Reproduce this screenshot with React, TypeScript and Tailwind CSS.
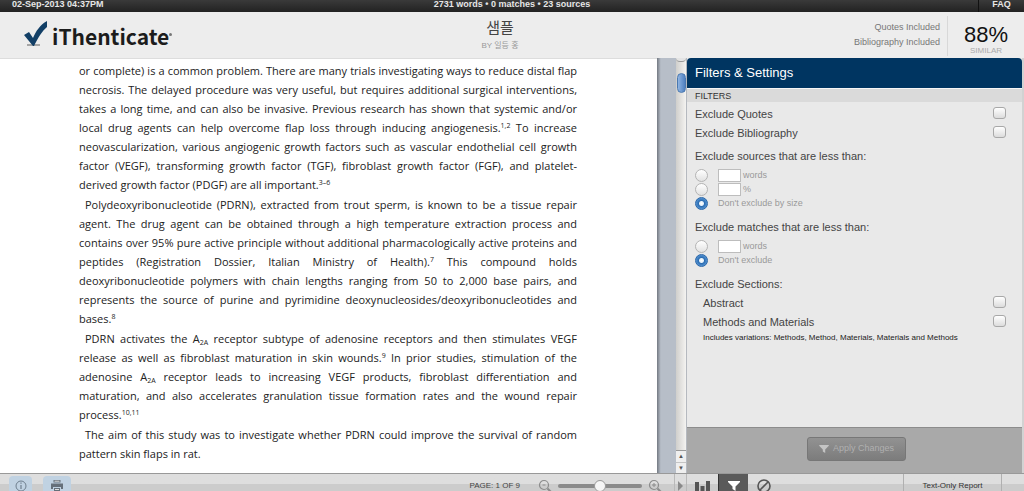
import { useState } from "react";
import type { ReactNode } from "react";

const checkboxClass =
  "mb-1 h-3 w-[13px] shrink-0 appearance-none rounded-[3px] border border-[#a8a8a8] bg-gradient-to-b from-white to-[#dcdcdc] checked:from-[#7fb0e0] checked:to-[#2f6fb4]";
const radioClass =
  "h-[13px] w-[13px] shrink-0 appearance-none rounded-full border border-[#b4b4b4] bg-gradient-to-b from-white to-[#e2e2e2] checked:border-[#2a66a8] checked:bg-[radial-gradient(circle,#ffffff_0,#e4f0fa_2px,#2c6db2_3px,#5c9ad8_6px)]";

type Line = { text: ReactNode; last?: boolean };

const S = ({ children }: { children: ReactNode }) => (
  <sup className="-top-1 text-[7px] leading-none">{children}</sup>
);
const Sub = () => <sub className="-bottom-0.5 text-[7px] leading-none">2A</sub>;

const paragraphs: Line[][] = [
  [
    { text: "or complete) is a common problem. There are many trials investigating ways to reduce distal flap" },
    { text: "necrosis. The delayed procedure was very useful, but requires additional surgical interventions," },
    { text: "takes a long time, and can also be invasive. Previous research has shown that systemic and/or" },
    { text: <>local drug agents can help overcome flap loss through inducing angiogenesis.<S>1,2</S> To increase</> },
    { text: "neovascularization, various angiogenic growth factors such as vascular endothelial cell growth" },
    { text: "factor (VEGF), transforming growth factor (TGF), fibroblast growth factor (FGF), and platelet-" },
    { text: <>derived growth factor (PDGF) are all important.<S>3–6</S></>, last: true },
  ],
  [
    { text: "Polydeoxyribonucleotide (PDRN), extracted from trout sperm, is known to be a tissue repair" },
    { text: "agent. The drug agent can be obtained through a high temperature extraction process and" },
    { text: "contains over 95% pure active principle without additional pharmacologically active proteins and" },
    { text: <>peptides (Registration Dossier, Italian Ministry of Health).<S>7</S> This compound holds</> },
    { text: "deoxyribonucleotide polymers with chain lengths ranging from 50 to 2,000 base pairs, and" },
    { text: "represents the source of purine and pyrimidine deoxynucleosides/deoxyribonucleotides and" },
    { text: <>bases.<S>8</S></>, last: true },
  ],
  [
    { text: <>PDRN activates the A<Sub /> receptor subtype of adenosine receptors and then stimulates VEGF</> },
    { text: <>release as well as fibroblast maturation in skin wounds.<S>9</S> In prior studies, stimulation of the</> },
    { text: <>adenosine A<Sub /> receptor leads to increasing VEGF products, fibroblast differentiation and</> },
    { text: "maturation, and also accelerates granulation tissue formation rates and the wound repair" },
    { text: <>process.<S>10,11</S></>, last: true },
  ],
  [
    { text: "The aim of this study was to investigate whether PDRN could improve the survival of random" },
    { text: "pattern skin flaps in rat.", last: true },
  ],
];

const FunnelIcon = ({ className }: { className: string }) => (
  <svg viewBox="0 0 12 10" className={className} fill="currentColor">
    <path d="M0 0h12v1L7.5 5.5V10L4.5 8V5.5L0 1z" />
  </svg>
);

const MagnifierIcon = ({ plus }: { plus?: boolean }) => (
  <svg viewBox="0 0 14 14" className="h-3.5 w-3.5 shrink-0 text-[#8c8c8c]" fill="none" stroke="currentColor">
    <circle cx="6" cy="6" r="4.5" strokeWidth="1.2" />
    <path d="M9.5 9.5l4 4" strokeWidth="2" />
    <path d={plus ? "M4 6h4M6 4v4" : "M4.5 6h3"} strokeWidth="1" />
  </svg>
);

const CheckRow = ({ id, label, indent }: { id: string; label: string; indent?: boolean }) => (
  <div className={`flex h-[19px] items-center justify-between ${indent ? "pl-2" : ""}`}>
    <label htmlFor={id}>{label}</label>
    <input id={id} type="checkbox" className={checkboxClass} />
  </div>
);

const LimitRow = ({ name, unit }: { name: string; unit: string }) => (
  <div className="flex h-3.5 items-center">
    <input type="radio" name={name} id={`${name}-${unit}`} className={radioClass} />
    <input
      type="text"
      aria-label={`${name} ${unit}`}
      className="ml-2.5 h-[13px] w-[23px] border border-[#bdbdbd] bg-white"
    />
    <label htmlFor={`${name}-${unit}`} className="pt-px pl-0.5">{unit}</label>
  </div>
);

const OffRow = ({ name, label }: { name: string; label: string }) => (
  <div className="flex h-3.5 items-center">
    <input type="radio" name={name} id={`${name}-off`} defaultChecked className={radioClass} />
    <label htmlFor={`${name}-off`} className="pt-px pl-2.5">{label}</label>
  </div>
);

const App = () => {
  const [zoom, setZoom] = useState(50);

  return (
    <div className="flex h-screen flex-col overflow-hidden bg-white font-['Liberation_Sans',Arial,sans-serif]">
      {/* TOP BAR */}
      <div className="grid h-3 shrink-0 grid-cols-3 bg-gradient-to-b from-[#3a3a3a] to-[#222222] text-[9px] leading-[9px] font-bold text-[#e6e6e6]">
        <span className="pl-3">02-Sep-2013 04:37PM</span>
        <span className="text-center">2731 words • 0 matches • 23 sources</span>
        <div className="flex justify-end">
          <a href="#faq" className="w-[46px] border-l border-[#111111] text-center">FAQ</a>
        </div>
      </div>

      {/* HEADER */}
      <header className="grid h-[46px] shrink-0 grid-cols-3 bg-[#ededed]">
        <div className="flex items-center pl-6">
          <svg viewBox="0 0 24 26" className="mb-1 h-[26px] w-6">
            <path d="M3 23h13v2H3z" fill="#a5a5a5" />
            <path d="M0 14l5-3 4 6C12 10 16 4 23 0v6C18 10 14 17 10 25H9z" fill="#123f66" />
          </svg>
          <span className="pl-1 font-['Noto_Sans_CJK_KR',sans-serif] text-[21px] leading-6 font-bold text-[#1c1c1c]">
            iThenticate
          </span>
          <span className="mb-1 h-[3px] w-[3px] rounded-full bg-[#777777]" />
        </div>
        <div className="flex flex-col items-center pt-1.5 pr-6 font-['Liberation_Sans','Noto_Sans_CJK_KR',sans-serif]">
          <h1 className="text-[15px] leading-5 text-[#444444]">샘플</h1>
          <p className="pt-0.5 text-[8px] leading-3 text-[#999999]">BY 일등 홍</p>
        </div>
        <div className="flex justify-end">
          <div className="pt-2 pr-[7px] text-right text-[9px] leading-[15px] text-[#777777]">
            <p>Quotes Included</p>
            <p>Bibliography Included</p>
          </div>
          <div className="my-1 w-[77px] border-l border-[#d8d8d8] pt-2 text-center">
            <p className="text-[22px] leading-[22px] text-[#111111]">88%</p>
            <p className="text-[8px] leading-[10px] text-[#aaaaaa]">SIMILAR</p>
          </div>
        </div>
      </header>

      <div className="flex min-h-0 flex-1">
        {/* DOCUMENT */}
        <main className="flex min-w-0 flex-1 bg-[#b7bec8]">
          <article className="min-w-0 flex-1 space-y-px overflow-hidden border-t border-[#dddddd] bg-white pt-0.5 pr-20 pl-[79px] font-['Open_Sans',sans-serif] text-[11px] leading-[19px] text-[#222222]">
            {paragraphs.map((lines, p) => (
              <p key={p}>
                {lines.map((line, i) => (
                  <span
                    key={i}
                    className={`block whitespace-nowrap ${line.last ? "text-left" : "[text-align-last:justify]"} ${i === 0 && p > 0 ? "pl-1.5" : ""}`}
                  >
                    {line.text}
                  </span>
                ))}
              </p>
            ))}
          </article>
          <div className="w-[19px] shrink-0 bg-gradient-to-r from-[#737982] via-[#b7bec8] via-20% to-[#b7bec8]" />
          <div className="flex w-[11px] shrink-0 flex-col items-center border-r border-[#b5b9bf] bg-gradient-to-r from-[#d0cfcc] to-[#f4f3f1]">
            <div className="h-1 w-full shrink-0 rounded-b-full border-b border-[#999999] bg-[#e4e4e4]" />
            <div className="mt-[11px] h-5 w-[9px] shrink-0 rounded-full border border-[#4a78b0] bg-gradient-to-r from-[#8fb4e2] to-[#4f80c0]" />
            <div className="flex-1" />
            <div className="w-full border-b border-[#999999]" />
            <button aria-label="Scroll up" className="h-[11px] w-full bg-[#efefef] text-[6px] leading-[11px] text-[#555555]">▲</button>
            <button aria-label="Scroll down" className="h-[11px] w-full border-t border-[#c4c4c4] bg-[#efefef] text-[6px] leading-[11px] text-[#555555]">▼</button>
          </div>
        </main>

        {/* FILTERS PANEL */}
        <aside className="flex w-[337px] shrink-0 flex-col border-r-2 border-[#d2d2d2] bg-[#e9e9e9] text-[11px] text-[#444444]">
          <h2 className="h-[30px] shrink-0 rounded-t bg-[#003561] pl-2 text-[13px] leading-[30px] text-white">
            Filters &amp; Settings
          </h2>
          <h3 className="h-3.5 shrink-0 border-t border-[#f6f6f6] bg-[#dadada] pl-2 text-[9px] leading-[14px] text-[#333333]">
            FILTERS
          </h3>
          <form className="flex min-h-0 flex-1 flex-col">
            <div className="min-h-0 flex-1 pt-[3px] pr-4 pl-2">
              <CheckRow id="quotes" label="Exclude Quotes" />
              <CheckRow id="bibliography" label="Exclude Bibliography" />
              <fieldset className="mt-1">
                <legend className="h-[21px] leading-[19px]">Exclude sources that are less than:</legend>
                <div className="text-[9px] text-[#999999]">
                  <LimitRow name="sources" unit="words" />
                  <LimitRow name="sources" unit="%" />
                  <OffRow name="sources" label="Don't exclude by size" />
                </div>
              </fieldset>
              <fieldset className="mt-2">
                <legend className="h-[21px] leading-[19px]">Exclude matches that are less than:</legend>
                <div className="text-[9px] text-[#999999]">
                  <LimitRow name="matches" unit="words" />
                  <OffRow name="matches" label="Don't exclude" />
                </div>
              </fieldset>
              <fieldset className="mt-2">
                <legend className="h-[19px] leading-[19px]">Exclude Sections:</legend>
                <CheckRow id="abstract" label="Abstract" indent />
                <CheckRow id="methods" label="Methods and Materials" indent />
                <p className="pl-2 text-[8px] leading-3 text-[#222222]">
                  Includes variations: Methods, Method, Materials, Materials and Methods
                </p>
              </fieldset>
            </div>
            <div className="flex h-[46px] shrink-0 items-center justify-center border-t border-[#8c8c8c] bg-[#a9a9a9] pb-1 pl-1">
              <button
                type="button"
                className="flex h-6 w-[99px] items-center justify-center gap-1 rounded-[3px] border border-[#777777] bg-gradient-to-b from-[#929292] to-[#7c7c7c] text-[9px] text-[#b0b0b0]"
              >
                <FunnelIcon className="h-2 w-2.5 text-[#c4c4c4]" />
                Apply Changes
              </button>
            </div>
          </form>
        </aside>
      </div>

      {/* FOOTER */}
      <footer className="flex h-[18px] shrink-0 overflow-hidden border-t border-[#999999] bg-gradient-to-b from-[#dedede] from-60% to-[#cccccc] to-60%">
        <div className="flex h-6 min-w-0 flex-1 items-center">
          <button aria-label="Document info" className="mt-1 ml-[9px] flex h-full w-[23px] items-center justify-center rounded bg-[#c0d2e2] pb-1">
            <svg viewBox="0 0 12 12" className="h-3 w-3 text-[#6f7f8e]" fill="none" stroke="currentColor">
              <circle cx="6" cy="6" r="5" />
              <path d="M6 5v4M6 2.5v1.2" strokeWidth="1.2" />
            </svg>
          </button>
          <button aria-label="Print" className="mt-1 ml-[11px] flex h-full w-7 items-center justify-center rounded bg-[#c0d2e2] pb-1">
            <svg viewBox="0 0 12 12" className="h-3 w-3 text-[#66707a]" fill="currentColor">
              <path d="M2.5 0h7v2.5h-7zM0 3.5h12V9h-2V7H2v2H0zM3 8h6v4H3z" />
              <path d="M3.5 1.2h5M4 9.5h4" stroke="#dedede" />
            </svg>
          </button>
          <span className="ml-auto pr-[18px] text-[8px] text-[#444444]">PAGE: 1 OF 9</span>
          <MagnifierIcon />
          <input
            type="range"
            aria-label="Zoom"
            value={zoom}
            onChange={(e) => setZoom(Number(e.target.value))}
            className="mx-1.5 h-1 w-[84px] appearance-none rounded-full bg-[#8b8b8b] [&::-webkit-slider-thumb]:h-3 [&::-webkit-slider-thumb]:w-3 [&::-webkit-slider-thumb]:appearance-none [&::-webkit-slider-thumb]:rounded-full [&::-webkit-slider-thumb]:border [&::-webkit-slider-thumb]:border-[#999999] [&::-webkit-slider-thumb]:bg-[#f6f6f6]"
          />
          <MagnifierIcon plus />
          <button aria-label="Collapse panel" className="ml-3 flex h-full w-[13px] items-center justify-center border-x border-[#b9b9b9]">
            <svg viewBox="0 0 5 10" className="h-2.5 w-[5px] text-[#8a8a8a]" fill="currentColor">
              <path d="M0 0l5 5-5 5z" />
            </svg>
          </button>
        </div>
        <div className="flex h-6 w-[337px] shrink-0 items-center">
          <button aria-label="Sources" className="flex h-full w-[31px] items-center justify-center">
            <svg viewBox="0 0 15 10" className="h-2.5 w-[15px] text-[#555555]" fill="currentColor">
              <path d="M0 1h4v9H0zM5.5 5h4v5h-4zM11 0h4v10h-4z" />
            </svg>
          </button>
          <button aria-label="Filters" className="flex h-full w-[30px] items-center justify-center border-l border-[#333333] bg-[#5a5a5a]">
            <FunnelIcon className="h-2.5 w-3 text-white" />
          </button>
          <button aria-label="Excluded" className="flex h-full w-8 items-center justify-center">
            <svg viewBox="0 0 14 14" className="h-3.5 w-3.5 text-[#555555]" fill="none" stroke="currentColor" strokeWidth="1.6">
              <circle cx="7" cy="7" r="6" />
              <path d="M3 11l8-8" />
            </svg>
          </button>
          <button className="mr-[22px] ml-auto h-full w-[99px] border-x border-[#b0b0b0] text-[8px] text-[#333333]">
            Text-Only Report
          </button>
        </div>
      </footer>
    </div>
  );
};

export default App;
